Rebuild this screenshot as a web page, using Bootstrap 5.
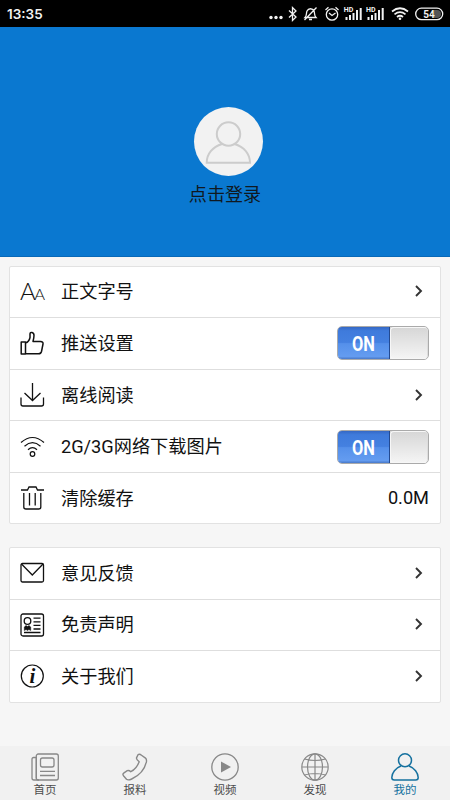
<!DOCTYPE html>
<html lang="zh-CN">
<head>
<meta charset="utf-8">
<meta name="viewport" content="width=device-width, initial-scale=1">
<title>我的</title>
<link href="https://cdn.jsdelivr.net/npm/bootstrap@5.3.0/dist/css/bootstrap.min.css" rel="stylesheet">
<style>
body{font-family:Roboto,"Noto Sans CJK SC",sans-serif;background:#f6f6f6;color:#111;height:800px;overflow:hidden}
svg{display:block;flex:none;fill:none;stroke:currentColor;overflow:visible}
svg text{stroke:none;fill:currentColor}
.status{height:27px;background:#000;color:#f2f2f2}
.clock{font:600 13.5px/27px Inter,sans-serif;padding-left:7px;padding-top:1px}
.hero{height:230px;background:#0a78d0;border-bottom:1px solid #0869b8;padding-top:80px}
.avatar{width:69px;height:69px;margin-left:7px;background:#f2f2f2;color:#ccc}
.login{font-size:18.1px;line-height:26px;margin-top:6px;color:#101820}
.panel{width:432px;margin:8.6px auto 0;background:#fff;border:1px solid #e2e2e2;border-radius:2px}
.panel + .panel{margin-top:22.6px}
.entry{height:51.6px;padding:0 11px 0 10px;font-size:18.2px;line-height:26px;border-bottom:1px solid #dedede}
.entry:last-child{border-bottom:0;height:50.4px}
.entry-label{margin-left:17px;padding-top:1px}
.chev{margin-right:6px;margin-bottom:1px;color:#333}
.toggle{width:92px;height:34px;border:1px solid #aaa;border-radius:5px;background:linear-gradient(#d6d6d6,#f5f5f5);overflow:hidden}
.toggle-on{width:52px;background:linear-gradient(#3568c4,#3f7bdc 12%,#4480e0 48%,#5590ea 52%,#649cf0 92%,#4878c8);border-right:1px solid #234a91;color:#fff;font:700 20px/34px "Roboto",sans-serif}
.toggle-on span{display:block;transform:scaleX(.82)}
.toggle-knob{border:1px solid #f7f7f7;border-right-color:#ddd;border-radius:4px 3px 3px 4px}
.tabs{height:54px;background:#f1f1f1;color:#888}
.tabs a{width:90px;color:#888;padding-top:7px}
.tabs span{font-size:11.5px;line-height:16px;padding-top:1px;color:#4c4c4c}
.tabs a.current,.tabs a.current span{color:#15719f}
</style>
<script src="https://cdn.jsdelivr.net/npm/bootstrap@5.3.0/dist/js/bootstrap.bundle.min.js"></script>
</head>
<body class="d-flex flex-column">
<header class="status d-flex justify-content-between flex-shrink-0">
  <div class="clock">13:35</div>
  <svg width="182" height="27" viewBox="268 0 182 27" stroke-width="1.3">
    <g fill="currentColor" stroke="none"><circle cx="271" cy="17.5" r="1.7"/><circle cx="276" cy="17.5" r="1.7"/><circle cx="281" cy="17.5" r="1.7"/></g>
    <path d="M289 10.5l7 6.5-3.5 3.5v-13l3.5 3.5-7 6.5"/>
    <path d="M305 17.5c2-2 1-4 2-6.500 1.500-3 5.500-3 7 0 1 2.500 0 4.500 2 6.500zM309 19.500h3M304.500 20L316.500 7.500"/>
    <circle cx="332" cy="14.500" r="5.700"/><path d="M329 13l3 2.500 3.500-2.500M325.500 10l3-2.800M338.500 10l-3-2.800"/>
    <g stroke-width="2"><path d="M346.500 20v-3M350 20v-5M353.500 20v-7M357 20v-10M360.700 20v-12M368.500 20v-3M372 20v-5M375.500 20v-7M379 20v-10M382.700 20v-12"/></g>
    <text x="343.800" y="12" font-family="Roboto" font-weight="700" font-size="7">HD</text><text x="366" y="12" font-family="Roboto" font-weight="700" font-size="7">HD</text>
    <path stroke-width="1.700" d="M392 11.500q8-6.500 16 0M394.500 14.300q5.500-4.500 11 0M397 17q3-2.500 6 0"/><circle cx="400" cy="18.800" r="1.300" fill="currentColor" stroke="none"/>
    <rect x="415.700" y="8.200" width="27" height="11.500" rx="5.700"/>
    <path d="M434 10h3a4 4 0 0 1 0 8h-3z" fill="#555" stroke="none"/>
    <text x="429" y="17.700" text-anchor="middle" font-family="Roboto" font-weight="700" font-size="10">54</text>
  </svg>
</header>
<section class="hero flex-shrink-0 d-flex flex-column align-items-center">
  <div class="avatar rounded-circle"><svg width="69" height="69" viewBox="0 0 69 69" stroke-width="2"><circle cx="34.500" cy="27" r="11.700"/><path d="M28 37C18.500 40 12.700 47 12.700 55.800h43.300c0-9-6-16-15.500-18.800"/></svg></div>
  <div class="login">点击登录</div>
</section>
<main class="flex-grow-1">
  <div class="panel">
    <div class="entry d-flex align-items-center"><svg width="24" height="24" viewBox="0 0 24 24"><text x="0" y="20" font-family="Lato" font-weight="300" font-size="24" letter-spacing="-1.500">A<tspan font-size="16.500">A</tspan></text></svg><span class="entry-label me-auto">正文字号</span><svg class="chev" width="8" height="12" viewBox="0 0 8 12" stroke-width="1.900"><path d="M1 1l5 5-5 5"/></svg></div>
    <div class="entry d-flex align-items-center"><svg width="24" height="24" viewBox="0 0 24 24" stroke-width="1.500" stroke-linejoin="round"><path d="M1.200 11h4.300v12H1.200zM5.500 12c3-1 4-3 4.500-5.500V3c0-2.500 4-2 4 1.500 0 2-.5 4-1 6h7.500c2 0 2.800 1 2.500 2.500l-1.500 7.500c-.4 1.500-1.200 2.300-3 2.300h-13"/></svg><span class="entry-label me-auto">推送设置</span><div class="toggle d-flex"><div class="toggle-on text-center"><span>ON</span></div><div class="toggle-knob flex-grow-1"></div></div></div>
    <div class="entry d-flex align-items-center"><svg width="24" height="24" viewBox="0 0 24 24" stroke-width="1.300"><path d="M12.500 0v17M4.500 10l8 7.500 8-7.500M1 14.500v6.500a2 2 0 0 0 2 2h18.500a2 2 0 0 0 2-2v-6.500"/></svg><span class="entry-label me-auto">离线阅读</span><svg class="chev" width="8" height="12" viewBox="0 0 8 12" stroke-width="1.900"><path d="M1 1l5 5-5 5"/></svg></div>
    <div class="entry d-flex align-items-center"><svg width="24" height="24" viewBox="0 0 24 24" stroke-width="1.200"><path d="M1 7.500q11.500-10 23 0M4.500 11.200q8-7 16 0M8 14.700q4.500-4 9 0"/><circle cx="12.500" cy="19" r="2.300"/></svg><span class="entry-label me-auto">2G/3G网络下载图片</span><div class="toggle d-flex"><div class="toggle-on text-center"><span>ON</span></div><div class="toggle-knob flex-grow-1"></div></div></div>
    <div class="entry d-flex align-items-center"><svg width="24" height="24" viewBox="0 0 24 24" stroke-width="1.300"><path d="M1 4h6.500l1.500-3h7l1.500 3h6.500M3.800 7v14a2 2 0 0 0 2 2h13a2 2 0 0 0 2-2V7M9.500 7v12.500M15.200 7v12.500"/></svg><span class="entry-label me-auto">清除缓存</span><span>0.0M</span></div>
  </div>
  <div class="panel">
    <div class="entry d-flex align-items-center"><svg width="24" height="24" viewBox="0 0 24 24" stroke-width="1.300"><rect x="1" y="2.500" width="22.500" height="18.500" rx="1.500"/><path d="M1.500 3l10.800 11L23 3"/></svg><span class="entry-label me-auto">意见反馈</span><svg class="chev" width="8" height="12" viewBox="0 0 8 12" stroke-width="1.900"><path d="M1 1l5 5-5 5"/></svg></div>
    <div class="entry d-flex align-items-center"><svg width="24" height="24" viewBox="0 0 24 24" stroke-width="1.300"><rect x="1" y="1" width="22.500" height="22" rx="2"/><circle cx="7.500" cy="8" r="3.300"/><path d="M4.300 17.500v-3.500l1.700-1.500 1.500 1 1.500-1 1.700 1.500v3.500l-1.800-1-1.400 1-1.400-1z" fill="currentColor" stroke-width=".5"/><path d="M13.500 5.200h7M13.500 8.800h7M13.500 12.400h7M13.500 16h7M4 19.500h16.500"/></svg><span class="entry-label me-auto">免责声明</span><svg class="chev" width="8" height="12" viewBox="0 0 8 12" stroke-width="1.900"><path d="M1 1l5 5-5 5"/></svg></div>
    <div class="entry d-flex align-items-center"><svg width="24" height="24" viewBox="0 0 24 24" stroke-width="1.200"><circle cx="12.300" cy="12" r="11"/><text x="12.300" y="19" text-anchor="middle" font-family="Liberation Serif" font-weight="700" font-style="italic" font-size="21">i</text></svg><span class="entry-label me-auto">关于我们</span><svg class="chev" width="8" height="12" viewBox="0 0 8 12" stroke-width="1.900"><path d="M1 1l5 5-5 5"/></svg></div>
  </div>
</main>
<nav class="tabs d-flex flex-shrink-0">
  <a class="d-flex flex-column align-items-center text-decoration-none"><svg width="28" height="28" viewBox="0 0 28 28" stroke-width="1.300"><rect x="5.300" y="1" width="22" height="26" rx="2"/><path d="M5 4.500H2.500A1.500 1.500 0 0 0 1 6v19a2 2 0 0 0 2 2h5M5.300 25.500V4"/><rect x="9.500" y="5" width="13.500" height="9" rx="2"/><path d="M9 18.300h15M9 22.500h15"/></svg><span>首页</span></a>
  <a class="d-flex flex-column align-items-center text-decoration-none"><svg width="28" height="28" viewBox="0 0 28 28" stroke-width="1.400" stroke-linejoin="round"><path d="M17 1.800c1-1 2-.9 3.500.5l4 2.800c1.200 1 1.200 2 .9 3.800-1.700 7.300-7 13.600-14.700 17.100-2 .9-4 1.300-5.200.3L2.700 23c-1.200-1.500-1-2.300.3-3.200l3.300-2.100c1-.5 2-.4 3.500 1 4-2 6.700-5.300 8.400-10-1.500-1.200-3-2.600-2.700-3.800z"/></svg><span>报料</span></a>
  <a class="d-flex flex-column align-items-center text-decoration-none"><svg width="28" height="28" viewBox="0 0 28 28" stroke-width="1.300"><circle cx="14" cy="14" r="13.200"/><path d="M10 8.500v11l10-5.500z" fill="currentColor" stroke="none"/></svg><span>视频</span></a>
  <a class="d-flex flex-column align-items-center text-decoration-none"><svg width="28" height="28" viewBox="0 0 28 28" stroke-width="1.200"><circle cx="14" cy="14" r="13.200"/><ellipse cx="14" cy="14" rx="7.500" ry="13.200"/><path d="M14 1v26M1 14h26M3.500 6q10.500 3 21 0M3.500 22q10.500-3 21 0"/></svg><span>发现</span></a>
  <a class="current d-flex flex-column align-items-center text-decoration-none"><svg width="28" height="28" viewBox="0 0 28 28" stroke-width="1.500"><circle cx="14" cy="7.300" r="6.500"/><path d="M10 13C4.500 15 1 20 .8 24.500c0 1.700.8 2.500 2.500 2.500h21.400c1.700 0 2.500-.8 2.500-2.500C27 20 23.500 15 18 13"/></svg><span>我的</span></a>
</nav>
</body>
</html>
